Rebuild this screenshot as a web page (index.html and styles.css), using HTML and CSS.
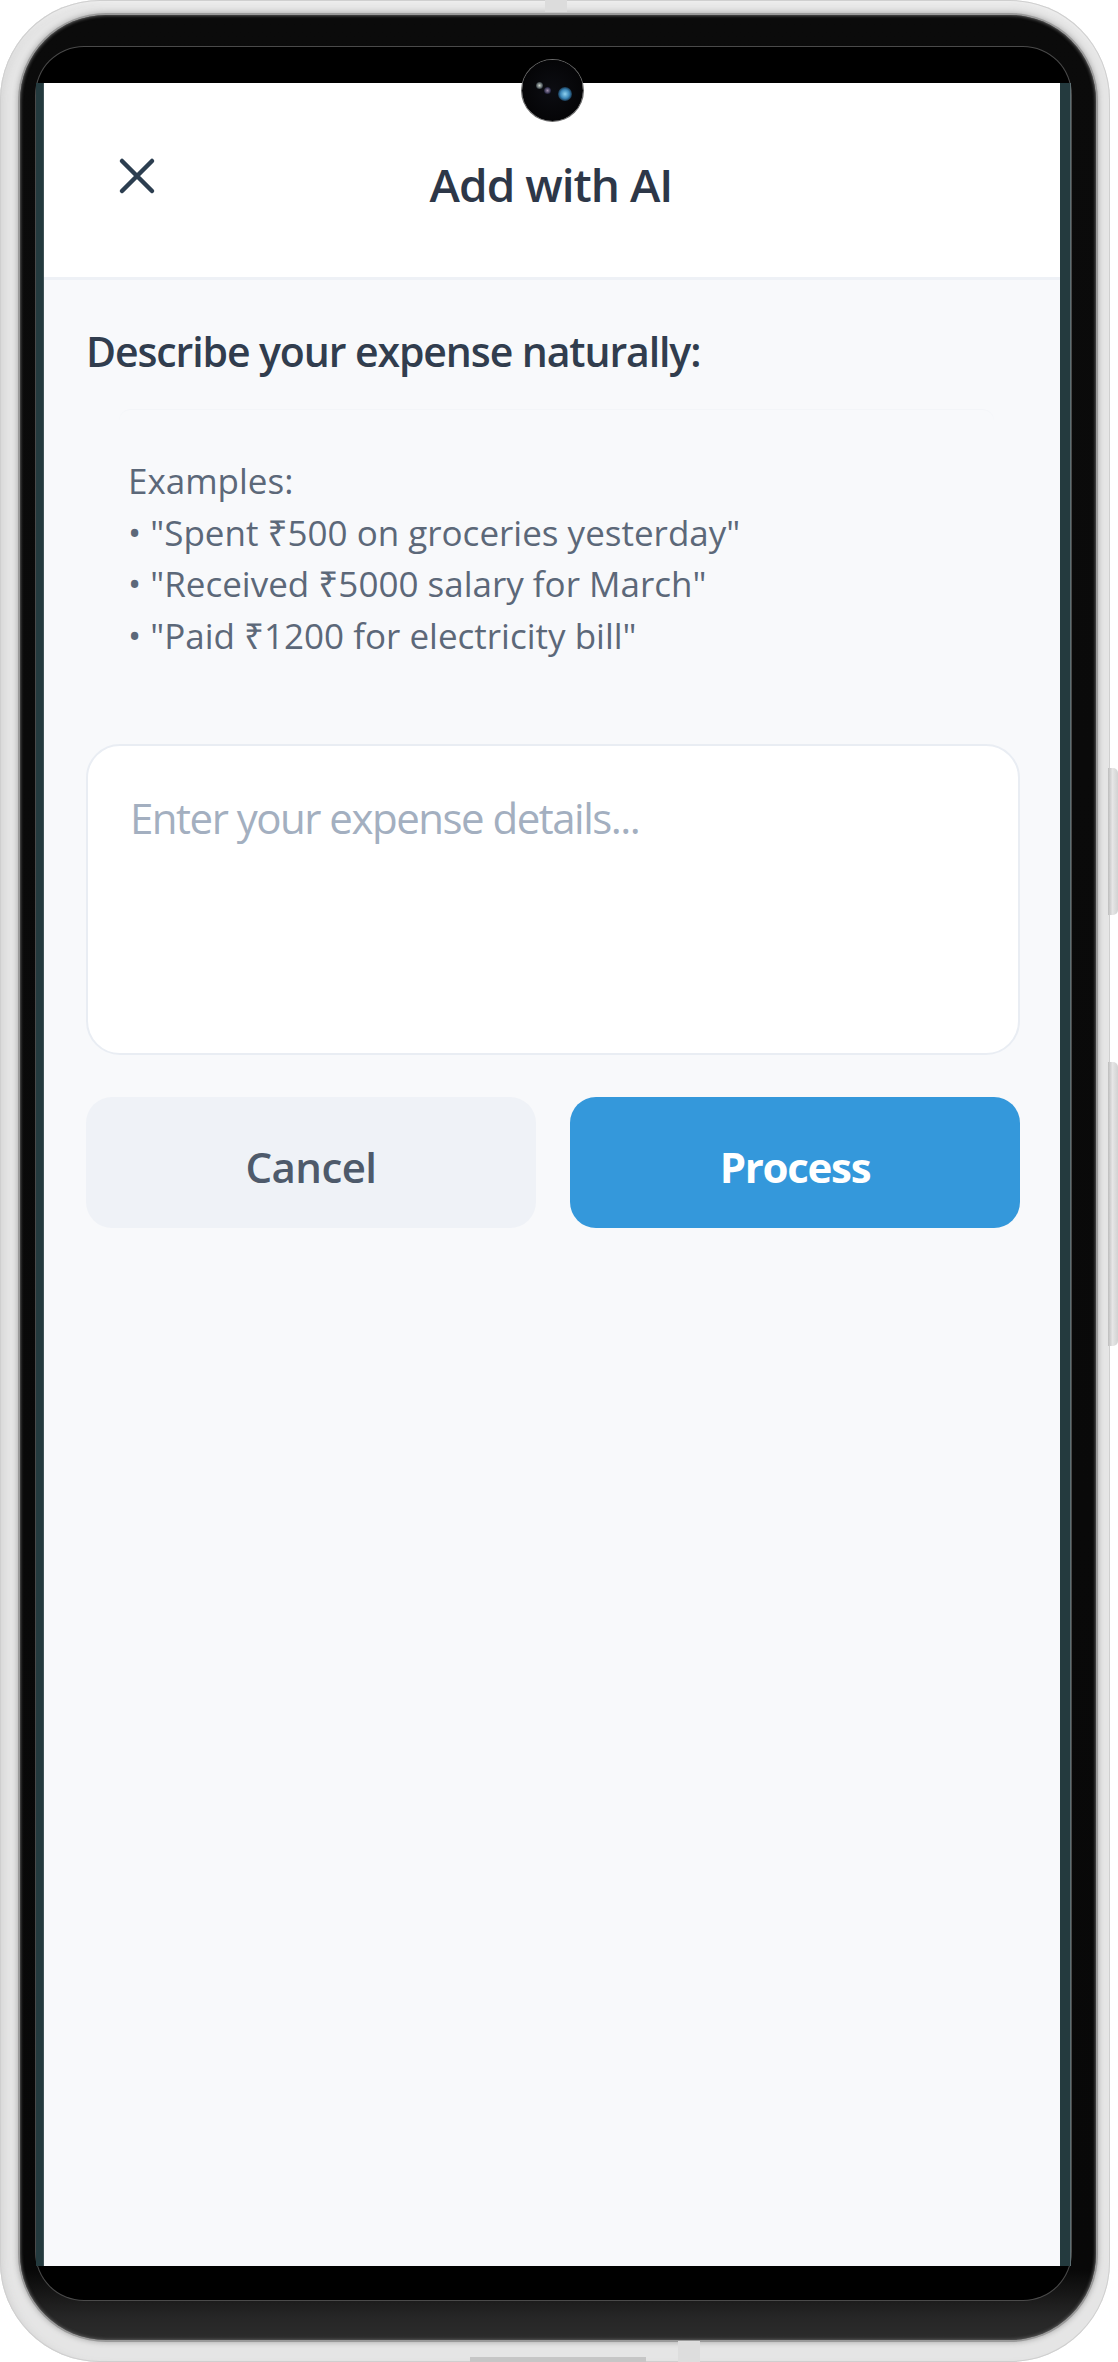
FILE: index.html
```html
<!DOCTYPE html>
<html lang="en">
<head>
<meta charset="utf-8">
<title>Add with AI</title>
<link rel="stylesheet" href="styles.css">
</head>
<body>
<div class="device">
  <div class="top-notch-bar"></div>
  <div class="phone">
    <div class="bezel">
      <div class="glass">
        <div class="camera"><span class="lens l1"></span><span class="lens l2"></span><span class="lens l3"></span></div>
        <div class="screen">
          <div class="edge edge-l"></div>
          <div class="app">
            <header class="topbar">
              <button class="close" aria-label="Close">
                <svg viewBox="0 0 38 38" width="38" height="38"><path d="M4 4 L34 34 M34 4 L4 34" fill="none" stroke="#2c3e50" stroke-width="4.5" stroke-linecap="round"/></svg>
              </button>
              <h1 class="title">Add with AI</h1>
              <span class="spacer"></span>
            </header>
            <main class="content">
              <h2 class="prompt">Describe your expense naturally:</h2>
              <div class="examples">
                <p>Examples:</p>
                <p>• "Spent ₹500 on groceries yesterday"</p>
                <p>• "Received ₹5000 salary for March"</p>
                <p>• "Paid ₹1200 for electricity bill"</p>
              </div>
              <div class="input">Enter your expense details...</div>
              <div class="actions">
                <button class="btn btn-cancel">Cancel</button>
                <button class="btn btn-process">Process</button>
              </div>
            </main>
          </div>
          <div class="edge edge-r"></div>
        </div>
      </div>
    </div>
  </div>
  <div class="side-btn side-1"></div>
  <div class="side-btn side-2"></div>
  <div class="bottom-bar"></div>
  <div class="bottom-port"></div>
</div>
</body>
</html>
```
FILE: styles.css
```css
* { box-sizing: border-box; }
html, body { margin: 0; padding: 0; background: #ffffff; }
body { width: 1118px; height: 2362px; overflow: hidden; font-family: "Open Sans", "Noto Sans", sans-serif; }

.device { position: relative; width: 1118px; height: 2362px; }

.phone {
  width: 1110px;
  height: 2362px;
  padding: 15px 14px 22px 20px;
  border-radius: 100px;
  background: #e5e5e5;
  box-shadow: inset 0 0 0 1px #cfcfcf, inset 0 6px 6px -4px #f4f4f4, inset 6px 0 8px -4px #d0d0d0;
}

.bezel {
  height: 100%;
  padding: 32px 25px 40px 16px;
  border-radius: 86px;
  background: linear-gradient(to bottom, #0b0b0b 0, #080808 97%, #262626 99%, #2c2c2c 100%);
  box-shadow: 0 0 0 2px #9a9a9a, 0 0 5px 3px #b5b5b5, inset 0 0 3px 1px #555;
}

.glass {
  position: relative;
  height: 100%;
  padding: 36px 0 34px 0;
  border-radius: 48px;
  background: #000;
  box-shadow: 0 0 0 1px #4a4a4a;
}

.screen { display: flex; height: 100%; }
.edge { flex: none; background: #243a3e; }
.edge-l { width: 8px; box-shadow: inset -1px 0 0 #3f5256; }
.edge-r { width: 11px; box-shadow: inset -1px 0 0 #5d6e72; }

.app { flex: 1; display: flex; flex-direction: column; background: #f8f9fb; }

.topbar {
  display: flex;
  align-items: center;
  height: 197px;
  padding: 8px 40px 0 74px;
  background: #ffffff;
  border-bottom: 3px solid #eef1f6;
}
.close { flex: none; width: 38px; height: 38px; padding: 0; border: 0; background: none; display: flex; margin-top: -16px; }
.spacer { flex: none; width: 38px; }
.title {
  flex: 1;
  margin: 0;
  text-align: center;
  font-size: 46px;
  font-weight: 600;
  color: #2d3748;
  letter-spacing: -1px;
  padding-right: 36px;
}

.content { display: flex; flex-direction: column; padding: 46px 40px 0 42px; }

.prompt {
  margin: 0;
  font-size: 41px;
  line-height: 50px;
  font-weight: 600;
  color: #313d4e;
  letter-spacing: -1.1px;
}

.examples {
  margin: 33px 26px 0 33px;
  padding: 45px 0 0 9px;
  border-top: 1px solid #f3f5f8;
  border-radius: 12px;
}
.examples p {
  margin: 0;
  font-size: 35px;
  line-height: 51.7px;
  color: #5c6879;
  letter-spacing: 0;
}

.input {
  margin-top: 82px;
  height: 311px;
  padding: 42px 42px;
  background: #ffffff;
  border: 2px solid #e9edf3;
  border-radius: 34px;
  font-size: 42px;
  line-height: 60px;
  color: #a3afc0;
  letter-spacing: -1.5px;
}

.actions { display: flex; gap: 34px; margin-top: 42px; }
.btn {
  flex: 1;
  height: 131px;
  padding: 8px 0 0;
  border: 0;
  border-radius: 26px;
  font-family: inherit;
  font-size: 42px;
  letter-spacing: -0.6px;
}
.btn-cancel { background: #eff2f7; color: #4e5a6b; font-weight: 600; }
.btn-process { background: #3498db; color: #ffffff; font-weight: 700; letter-spacing: -1.3px; }

.camera {
  position: absolute;
  left: 486px;
  top: 13px;
  width: 61px;
  height: 61px;
  border-radius: 50%;
  background: radial-gradient(circle at 50% 50%, #0c0d12 0, #050507 70%);
  box-shadow: 0 0 0 1px #6a6a6a;
  z-index: 2;
}
.lens { position: absolute; border-radius: 50%; }
.l1 { left: 14px; top: 22px; width: 7px; height: 7px; background: radial-gradient(circle, #cfd8d0 0, rgba(120,140,150,0.4) 70%, transparent 100%); }
.l2 { left: 22px; top: 27px; width: 7px; height: 7px; background: radial-gradient(circle, #9e8fae 0, rgba(60,60,120,0.4) 70%, transparent 100%); }
.l3 { left: 36px; top: 27px; width: 14px; height: 14px; background: radial-gradient(circle, #8fd2f0 0, #3a86b8 45%, rgba(20,60,100,0.3) 80%, transparent 100%); }

.side-btn {
  position: absolute;
  left: 1108px;
  width: 10px;
  border-radius: 0 5px 5px 0;
  background: linear-gradient(to right, #bdbdbd 0, #e6e6e6 45%, #d2d2d2 100%);
}
.side-1 { top: 768px; height: 147px; }
.side-2 { top: 1062px; height: 284px; }

.top-notch-bar {
  position: absolute;
  left: 545px;
  top: 0;
  width: 22px;
  height: 12px;
  background: #dcdcdc;
  z-index: 3;
}
.bottom-bar {
  position: absolute;
  left: 470px;
  top: 2357px;
  width: 176px;
  height: 5px;
  background: #c6c6c6;
}
.bottom-port {
  position: absolute;
  left: 678px;
  top: 2341px;
  width: 22px;
  height: 21px;
  background: #dddddd;
}
```
